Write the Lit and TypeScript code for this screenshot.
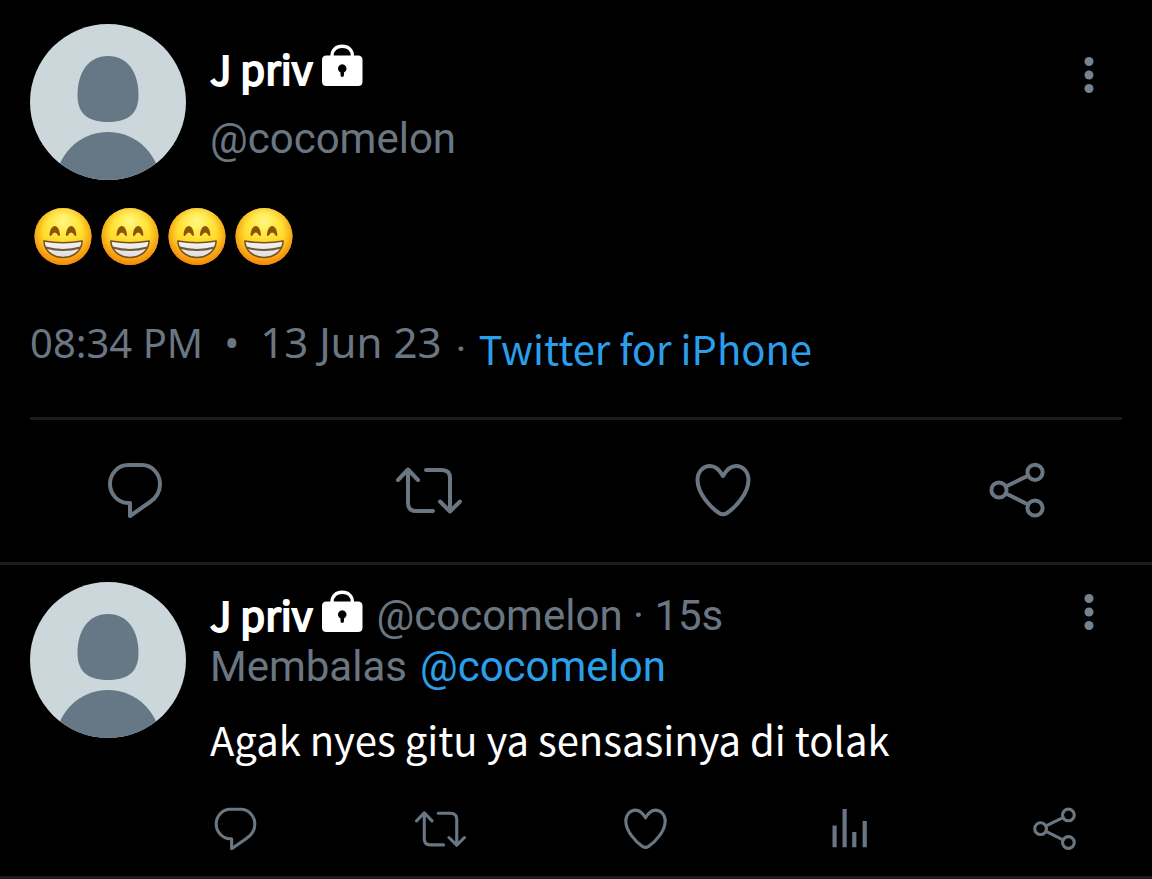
import { LitElement, html, css, svg } from "lit";
import { customElement, property } from "lit/decorators.js";

const glyphs = {
  reply: svg`<path d="M26 3H40C50 3 58 12 58 22C58 30 54 36 48 40L28 54V41H26C16 41 8 32 8 22S16 3 26 3Z"/>`,
  retweet: svg`<path d="M2 18 12 7.5 22 18M12 8V41Q12 49 20 49H37M30 8H46Q54 8 54 16V49M44 39.5 54 49.5 64 39.5"/>`,
  like: svg`<path d="M33 14C29 7 25 4 20 4C13 4 7.500 10 7.500 18C7.500 31 20 45 29 51Q33 53.500 37 51C46 45 58.500 31 58.500 18C58.500 10 53 4 46 4C41 4 37 7 33 14Z"/>`,
  share: svg`<circle cx="15" cy="28" r="7.6"/><circle cx="51" cy="10.3" r="7.6"/><circle cx="51" cy="46" r="7.6"/><path d="M22 24.5 44 13.7M22 31.5 44 42.5"/>`,
  stats: svg`<path class="bars" d="M11 24h5.4v28h-5.4zM24 2.500h5.400v49.500h-5.400zM36.500 32.500h5.400v19.500h-5.400zM50 18h5.400v34h-5.400z"/>`,
};
type Glyph = keyof typeof glyphs;

@customElement("action-button")
class ActionButton extends LitElement {
  @property() glyph: Glyph = "reply";
  @property() label = "";
  static styles = css`
    :host { display: block; }
    button { display: block; padding: 0; border: 0; background: none; color: inherit; cursor: pointer; }
    svg { display: block; width: var(--icon-width, 66px); aspect-ratio: 66 / 56; fill: none; stroke: currentColor; stroke-width: 4; stroke-linecap: round; stroke-linejoin: round; }
    .bars { fill: currentColor; stroke: none; }
  `;
  render() {
    return html`<button aria-label=${this.label}><svg viewBox="0 0 66 56">${glyphs[this.glyph]}</svg></button>`;
  }
}

@customElement("more-button")
class MoreButton extends LitElement {
  static styles = css`
    :host { display: block; }
    button { display: block; padding: 0; border: 0; background: none; cursor: pointer; }
    svg { display: block; fill: #75828f; }
  `;
  render() {
    return html`<button aria-label="More"><svg width="24" height="44" viewBox="0 0 24 44">
      <circle cx="12" cy="8.500" r="4.500"/><circle cx="12" cy="22" r="4.500"/><circle cx="12" cy="35.500" r="4.500"/>
    </svg></button>`;
  }
}

@customElement("user-avatar")
class UserAvatar extends LitElement {
  static styles = css`
    :host { display: block; flex: none; width: 156px; height: 156px; border-radius: 50%; overflow: hidden; background: #ccd7dc; }
    svg { display: block; fill: #667785; }
  `;
  render() {
    return html`<svg viewBox="0 0 156 156" role="img" aria-label="Avatar">
      <path d="M78 32C98 32 108.500 49 108.500 71C108.500 89 99 98 78 98C57 98 47.500 89 47.500 71C47.500 49 58 32 78 32Z"/>
      <circle cx="78" cy="160.500" r="52.500"/>
    </svg>`;
  }
}

@customElement("user-name")
class UserName extends LitElement {
  static styles = css`
    :host { display: flex; gap: 9px; color: #fff; font: 400 40px/52px "Noto Sans CJK SC", sans-serif; -webkit-text-stroke: 2px #fff; white-space: nowrap; }
    svg { flex: none; margin-top: 2px; }
  `;
  render() {
    return html`<span>J priv</span>
      <svg width="41" height="42" viewBox="0 0 41 42" role="img" aria-label="Protected account">
        <path d="M10 13V12C10 5.500 14.500 2.300 20.200 2.300S30.400 5.500 30.400 12V13" fill="none" stroke="#fff" stroke-width="3.400"/>
        <path fill="#fff" fill-rule="evenodd" d="M4.500 11.500H36Q40.500 11.500 40.500 16V37.500Q40.500 42 36 42H4.500Q0 42 0 37.500V16Q0 11.500 4.500 11.500ZM18.500 28.500V31Q18.500 33 20.200 33T22 31V28.500A4.300 4.300 0 1 0 18.500 28.500Z"/>
      </svg>`;
  }
}

@customElement("grin-face")
class GrinFace extends LitElement {
  static styles = css`
    :host { display: block; }
    svg { display: block; }
  `;
  render() {
    return html`<svg width="58" height="58" viewBox="0 0 58 58" role="img" aria-label="😁">
      <defs>
        <linearGradient id="skin" x1="0" y1="0" x2="0" y2="1">
          <stop offset="0" stop-color="#ffe32e"/><stop offset=".5" stop-color="#ffdc2b"/><stop offset="1" stop-color="#ffa616"/>
        </linearGradient>
        <radialGradient id="rim" cx=".5" cy=".46" r=".55">
          <stop offset=".6" stop-color="#f79a10" stop-opacity="0"/><stop offset="1" stop-color="#ee8208" stop-opacity=".9"/>
        </radialGradient>
        <radialGradient id="shine" cx=".5" cy=".24" r=".42">
          <stop offset="0" stop-color="#fff98c" stop-opacity=".95"/><stop offset="1" stop-color="#fff04a" stop-opacity="0"/>
        </radialGradient>
        <linearGradient id="teeth" x1="0" y1="0" x2="0" y2="1">
          <stop offset="0" stop-color="#f4f4f8"/><stop offset="1" stop-color="#dcdce2"/>
        </linearGradient>
      </defs>
      <circle cx="29" cy="28.500" r="28.500" fill="url(#skin)"/>
      <circle cx="29" cy="28.500" r="28.500" fill="url(#rim)"/>
      <circle cx="29" cy="28.500" r="28.500" fill="url(#shine)"/>
      <path d="M15.500 27C16 21.500 18 18 20.800 18S25.600 21.500 26 27Q25.600 28.500 24.200 27.500Q22.500 24.500 20.800 24.500T17.400 27.500Q15.900 28.500 15.500 27ZM31.900 27C32.400 21.500 34.400 18 37.200 18S42 21.500 42.400 27Q42 28.500 40.600 27.500Q38.900 24.500 37.200 24.500T33.800 27.500Q32.300 28.500 31.900 27Z" fill="#8b5508"/>
      <path d="M9.800 33Q29 36.500 48.200 33C47.600 42 40.500 49.500 29 49.500S10.400 42 9.800 33Z" fill="url(#teeth)" stroke="#76501a" stroke-width="1.500" stroke-linejoin="round"/>
      <path d="M11.500 39.500Q29 44.500 46.500 39.500" fill="none" stroke="#74592f" stroke-width="2"/>
    </svg>`;
  }
}

@customElement("app-root")
class AppRoot extends LitElement {
  static styles = css`
    :host { display: block; background: #000; color: #6a7783; font: 400 42px/52px Roboto, sans-serif; }
    * { box-sizing: border-box; }
    article { border-bottom: 3px solid #1c1c1c; }
    a { color: #2b9fea; text-decoration: none; }
    p { margin: 0; }
    more-button { margin-left: auto; margin-right: 21px; }
    .main { padding: 24px 30px 44px; }
    .head, .reply { display: flex; gap: 24px; }
    .author { display: flex; flex-direction: column; gap: 19px; padding-top: 18px; }
    .head { height: 156px; }
    .head more-button { margin-top: 29px; }
    .emoji { display: flex; gap: 9px; padding: 28px 4px 0; }
    .meta { display: flex; margin-top: 50px; white-space: nowrap; }
    .date { display: flex; align-items: baseline; gap: 21px; font: 40px/52px "Noto Sans", sans-serif; }
    .day { font-size: 42px; }
    .source { font: 40px/64px "Noto Sans CJK SC", sans-serif; }
    .dot { margin: 0 12px 0 14px; line-height: 68px; }
    .actions { display: flex; justify-content: space-between; }
    .main .actions { margin-top: 33px; padding: 42px 72px 0; border-top: 3px solid #1c1c1c; }
    .reply { padding: 17px 30px 26px; }
    .content { flex: 1; min-width: 0; }
    .top { display: flex; }
    .byline { display: flex; gap: 14px; padding-top: 6px; white-space: nowrap; }
    .handle { line-height: 56px; }
    .top more-button { margin-top: 8px; }
    .target { display: flex; gap: 13px; margin-top: -3px; }
    .text { margin-top: 20px; color: #fff; font: 40px/52px "Noto Sans CJK SC", sans-serif; }
    .small { --icon-width: 51px; margin: 42px 42px 0 0; }
  `;
  render() {
    return html`
      <article class="main">
        <header class="head">
          <user-avatar></user-avatar>
          <div class="author"><user-name></user-name><span>@cocomelon</span></div>
          <more-button></more-button>
        </header>
        <div class="emoji">${[0, 1, 2, 3].map(() => html`<grin-face></grin-face>`)}</div>
        <div class="meta">
          <span class="date"><span>08:34 PM</span><span>•</span><span class="day">13 Jun 23</span></span>
          <span class="dot">·</span>
          <a class="source" href="#">Twitter for iPhone</a>
        </div>
        <div class="actions">
          <action-button glyph="reply" label="Reply"></action-button>
          <action-button glyph="retweet" label="Retweet"></action-button>
          <action-button glyph="like" label="Like"></action-button>
          <action-button glyph="share" label="Share"></action-button>
        </div>
      </article>
      <article class="reply">
        <user-avatar></user-avatar>
        <div class="content">
          <div class="top">
            <div class="byline"><user-name></user-name><span class="handle">@cocomelon · 15s</span></div>
            <more-button></more-button>
          </div>
          <p class="target">Membalas <a href="#">@cocomelon</a></p>
          <p class="text">Agak nyes gitu ya sensasinya di tolak</p>
          <div class="actions small">
            <action-button glyph="reply" label="Reply"></action-button>
            <action-button glyph="retweet" label="Retweet"></action-button>
            <action-button glyph="like" label="Like"></action-button>
            <action-button glyph="stats" label="Statistics"></action-button>
            <action-button glyph="share" label="Share"></action-button>
          </div>
        </div>
      </article>
    `;
  }
}
